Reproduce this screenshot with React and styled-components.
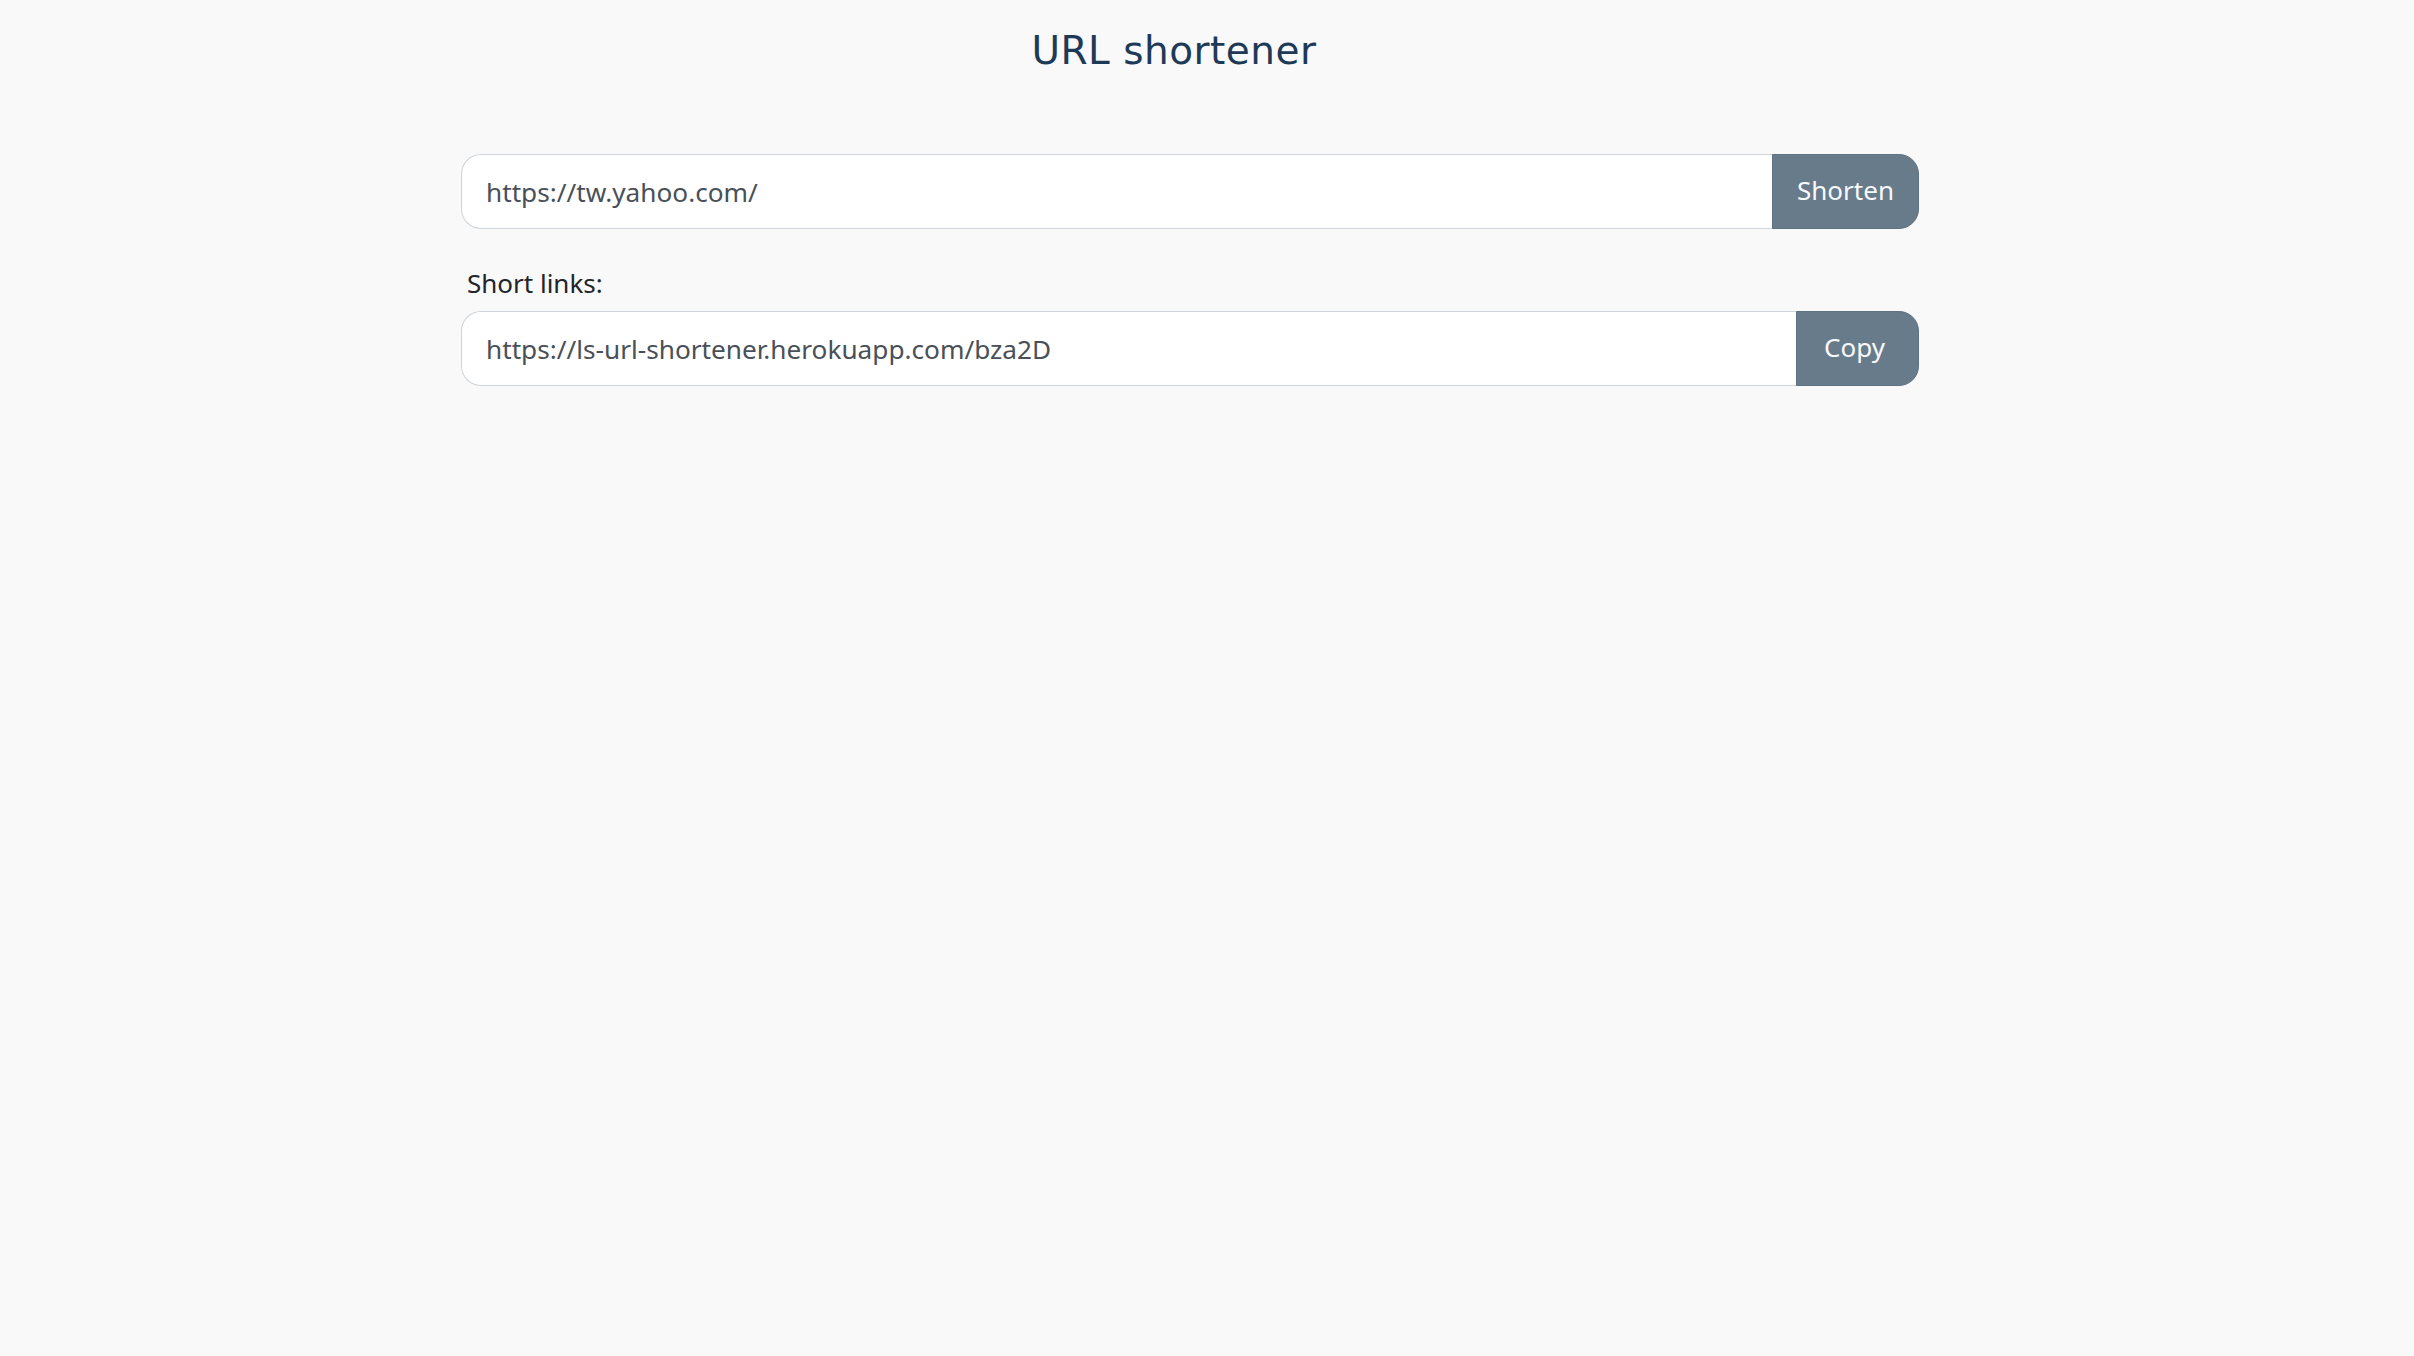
import React, { useState } from 'react';
import styled, { createGlobalStyle } from 'styled-components';

const GlobalStyle = createGlobalStyle`
  html, body {
    margin: 0;
    padding: 0;
    background: #f9f9f9;
  }
  body {
    font-family: "Noto Sans", "Open Sans", sans-serif;
    color: #212529;
  }
`;

const Page = styled.div`
  min-height: 100vh;
  padding-left: 461px;
  box-sizing: border-box;
`;

const Title = styled.h1`
  width: 1426px;
  margin: 0;
  padding-top: 23px;
  text-align: center;
  font-family: "DejaVu Sans", "Noto Sans", sans-serif;
  font-weight: 400;
  font-size: 39px;
  line-height: 56px;
  letter-spacing: 0.5px;
  color: #1e3a56;
`;

const Main = styled.main`
  width: 1458px;
  margin-top: 75px;
  display: flex;
  flex-direction: column;
`;

const InputGroup = styled.div`
  display: flex;
  height: 75px;
`;

const Field = styled.input`
  flex: 1;
  min-width: 0;
  box-sizing: border-box;
  height: 100%;
  padding: 0 24px;
  border: 1px solid #ced4da;
  border-right: none;
  border-radius: 20px 0 0 20px;
  background: #fff;
  font-family: "Noto Sans", sans-serif;
  font-size: 26.2px;
  color: #495057;
  outline: none;
`;

const Button = styled.button`
  width: ${(p) => p.$width}px;
  height: 100%;
  border: 1px solid #5f7283;
  border-radius: 0 20px 20px 0;
  background: #677b8b;
  color: #f8f9fa;
  font-family: "Noto Sans", sans-serif;
  font-size: 26px;
  padding: 0 ${(p) => p.$shift}px 3px 0;
  cursor: pointer;
`;

const Label = styled.label`
  display: block;
  margin: 37px 0 11px 6px;
  font-size: 26px;
  line-height: 34px;
  color: #212529;
`;

export default function App() {
  const [url, setUrl] = useState('https://tw.yahoo.com/');
  const short = 'https://ls-url-shortener.herokuapp.com/bza2D';

  return (
    <Page>
      <GlobalStyle />
      <Title>URL shortener</Title>
      <Main>
        <InputGroup>
          <Field value={url} onChange={(e) => setUrl(e.target.value)} />
          <Button $width={147} $shift={0}>Shorten</Button>
        </InputGroup>
        <Label>Short links:</Label>
        <InputGroup>
          <Field value={short} readOnly />
          <Button $width={123} $shift={6}>Copy</Button>
        </InputGroup>
      </Main>
    </Page>
  );
}
